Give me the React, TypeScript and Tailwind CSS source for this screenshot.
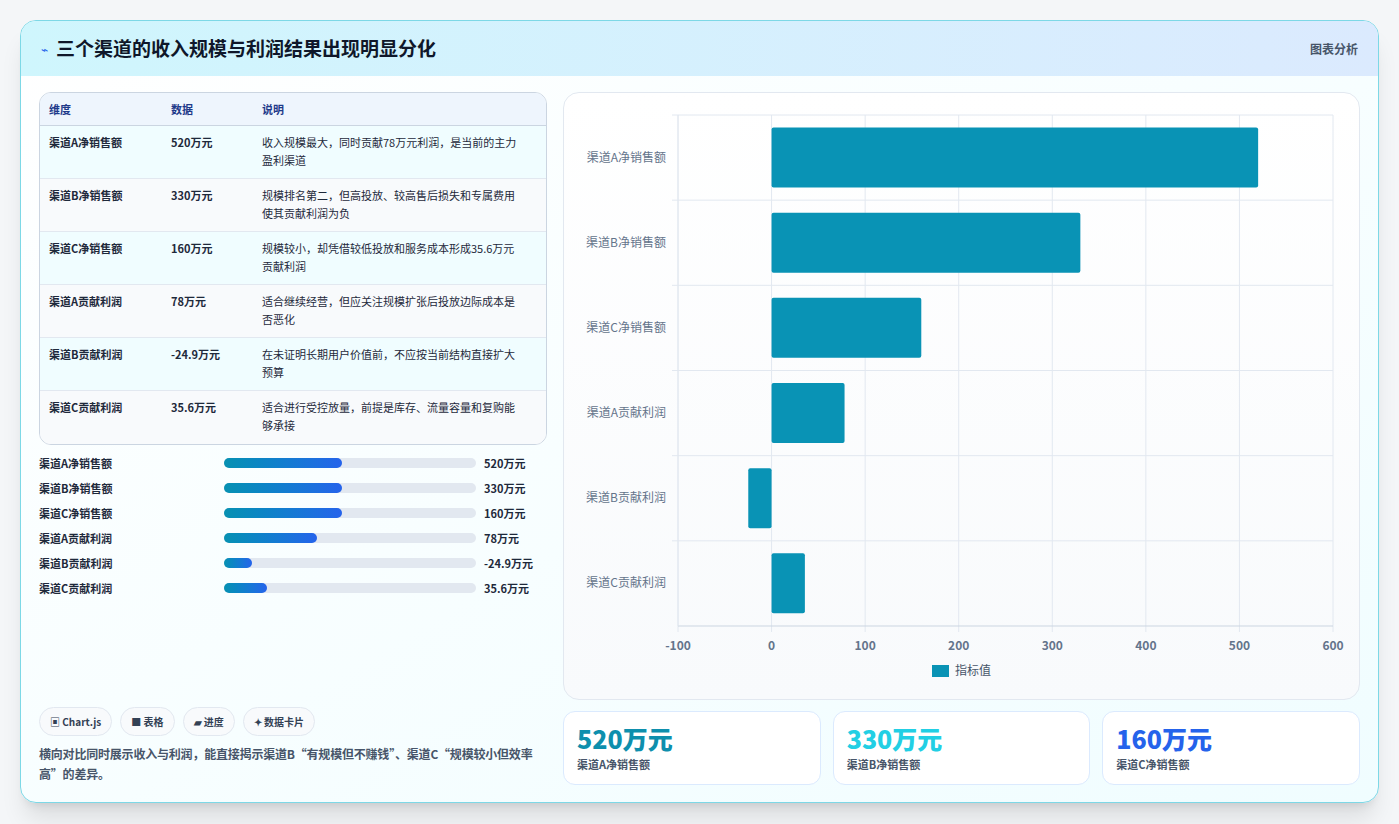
import React from 'react';

const rows = [
  { k: '渠道A净销售额', v: '520万元', d: '收入规模最大，同时贡献78万元利润，是当前的主力盈利渠道' },
  { k: '渠道B净销售额', v: '330万元', d: '规模排名第二，但高投放、较高售后损失和专属费用使其贡献利润为负' },
  { k: '渠道C净销售额', v: '160万元', d: '规模较小，却凭借较低投放和服务成本形成35.6万元贡献利润' },
  { k: '渠道A贡献利润', v: '78万元', d: '适合继续经营，但应关注规模扩张后投放边际成本是否恶化' },
  { k: '渠道B贡献利润', v: '-24.9万元', d: '在未证明长期用户价值前，不应按当前结构直接扩大预算' },
  { k: '渠道C贡献利润', v: '35.6万元', d: '适合进行受控放量，前提是库存、流量容量和复购能够承接' },
];

const bars = [
  { k: '渠道A净销售额', v: '520万元', w: '47%' },
  { k: '渠道B净销售额', v: '330万元', w: '47%' },
  { k: '渠道C净销售额', v: '160万元', w: '47%' },
  { k: '渠道A贡献利润', v: '78万元', w: '37%' },
  { k: '渠道B贡献利润', v: '-24.9万元', w: '11%' },
  { k: '渠道C贡献利润', v: '35.6万元', w: '17%' },
];

const values = [520, 330, 160, 78, -24.9, 35.6];

function Chart() {
  const x0 = 114, x1 = 769, y0 = 22, y1 = 533;
  const sx = (v: number) => x0 + ((v + 100) / 700) * (x1 - x0);
  const band = (y1 - y0) / 6;
  const ticks = [-100, 0, 100, 200, 300, 400, 500, 600];
  return (
    <svg width="795" height="605" className="block" style={{ fontFamily: '"Noto Sans CJK SC", "Noto Sans", sans-serif' }}>
      {ticks.map((t) => (
        <g key={t}>
          <line x1={sx(t)} x2={sx(t)} y1={y0} y2={y1 + 6} stroke="#e2e8f0" />
          <text x={sx(t)} y={y1 + 24} fontSize="12" fontWeight="600" fill="#64748b" textAnchor="middle">{t}</text>
        </g>
      ))}
      {values.map((v, i) => (
        <g key={i}>
          <line x1={x0 - 6} x2={x1} y1={y0 + band * i} y2={y0 + band * i} stroke="#e2e8f0" />
          <text x={x0 - 12} y={y0 + band * i + band / 2 + 4} fontSize="12" fill="#64748b" textAnchor="end">{rows[i].k}</text>
          <rect x={Math.min(sx(0), sx(v))} y={y0 + band * i + 12.5} width={Math.abs(sx(v) - sx(0))} height="60" rx="2" fill="#0993b5" />
        </g>
      ))}
      <line x1={x0} x2={x1} y1={y1} y2={y1} stroke="#cbd5e1" />
      <line x1={x0} x2={x0} y1={y0} y2={y1} stroke="#e2e8f0" />
      <rect x="368" y="572" width="17" height="12" fill="#0993b5" />
      <text x="391" y="582" fontSize="12" fill="#475569">指标值</text>
    </svg>
  );
}

export default function App() {
  return (
    <div className="w-[1399px] h-[824px] bg-[#f4f6f8] pt-5 px-5" style={{ fontFamily: '"Noto Sans CJK SC", "Noto Sans", sans-serif' }}>
      <div className="h-[783px] rounded-2xl border border-[#7dd8e6] bg-gradient-to-br from-white to-[#f0fdff] shadow-xl overflow-hidden flex flex-col">
        <div className="h-[55px] flex items-center justify-between px-5 bg-gradient-to-r from-[#cff6fd] to-[#dbeafe]">
          <div className="flex items-center gap-2">
            <span className="text-[#2563eb] text-xs">⌁</span>
            <h1 className="text-[19px] font-bold text-[#0f172a]">三个渠道的收入规模与利润结果出现明显分化</h1>
          </div>
          <span className="text-xs font-semibold text-[#475569]">图表分析</span>
        </div>
        <div className="flex gap-4 px-[18px] pt-4">
          <div className="w-[510px] flex flex-col">
            <div className="rounded-xl border border-[#cbd5e1] overflow-hidden bg-white">
              <div className="grid grid-cols-[122px_91px_1fr] bg-[#eef5fd] border-b border-[#cbd5e1] h-[33px] items-center px-[9px] text-[11px] font-bold text-[#1e3a8a]">
                <span>维度</span><span>数据</span><span>说明</span>
              </div>
              {rows.map((r, i) => (
                <div key={i} className={`grid grid-cols-[122px_91px_1fr] px-[9px] pt-[7px] h-[53px] text-[11px] leading-[18px] text-[#1e293b] ${i < 5 ? 'border-b border-[#e2e8f0]' : ''} ${i % 2 === 0 ? 'bg-[#f0fdff]' : 'bg-[#f8fafc]'}`}>
                  <span className="font-semibold">{r.k}</span>
                  <span className="font-semibold">{r.v}</span>
                  <span className="pr-3">{r.d}</span>
                </div>
              ))}
            </div>
            <div className="flex flex-col gap-[7px] mt-[9px]">
              {bars.map((b) => (
                <div key={b.k} className="flex items-center h-[18px] text-[11px] font-bold text-[#1e293b]">
                  <span className="w-[185px]">{b.k}</span>
                  <div className="w-[252px] h-[10px] rounded-full bg-[#e2e8f0]">
                    <div className="h-full rounded-full bg-gradient-to-r from-[#0891b2] to-[#2563eb]" style={{ width: b.w }} />
                  </div>
                  <span className="ml-2">{b.v}</span>
                </div>
              ))}
            </div>
            <div className="flex gap-2 mt-[110px] text-[10px] font-semibold text-[#334155]">
              <span className="rounded-full border border-[#e2e8f0] bg-[#f8fafc] px-[10px] py-[6px]">▣ Chart.js</span>
              <span className="rounded-full border border-[#e2e8f0] bg-[#f8fafc] px-[10px] py-[6px]">■ 表格</span>
              <span className="rounded-full border border-[#e2e8f0] bg-[#f8fafc] px-[10px] py-[6px]">▰ 进度</span>
              <span className="rounded-full border border-[#e2e8f0] bg-[#f8fafc] px-[10px] py-[6px]">✦ 数据卡片</span>
            </div>
            <p className="mt-[8px] text-[12px] leading-[20px] font-semibold text-[#475569] tracking-[-0.2px]">横向对比同时展示收入与利润，能直接揭示渠道B“有规模但不赚钱”、渠道C“规模较小但效率高”的差异。</p>
          </div>
          <div className="flex-1 flex flex-col gap-[11px]">
            <div className="h-[608px] rounded-2xl border border-[#e2e8f0] bg-gradient-to-b from-white to-[#f8fafc] overflow-hidden">
              <Chart />
            </div>
            <div className="grid grid-cols-3 gap-3">
              {[
                { v: '520万元', c: 'text-[#0e8fad]', k: '渠道A净销售额' },
                { v: '330万元', c: 'text-[#22cfe4]', k: '渠道B净销售额' },
                { v: '160万元', c: 'text-[#2563eb]', k: '渠道C净销售额' },
              ].map((s) => (
                <div key={s.k} className="h-[74px] rounded-xl border border-[#dbeafe] bg-white px-[13px] pt-[10px]">
                  <div className={`text-[25px] leading-[32px] font-extrabold ${s.c}`}>{s.v}</div>
                  <div className="text-[11px] font-semibold text-[#475569] mt-[2px]">{s.k}</div>
                </div>
              ))}
            </div>
          </div>
        </div>
      </div>
    </div>
  );
}
